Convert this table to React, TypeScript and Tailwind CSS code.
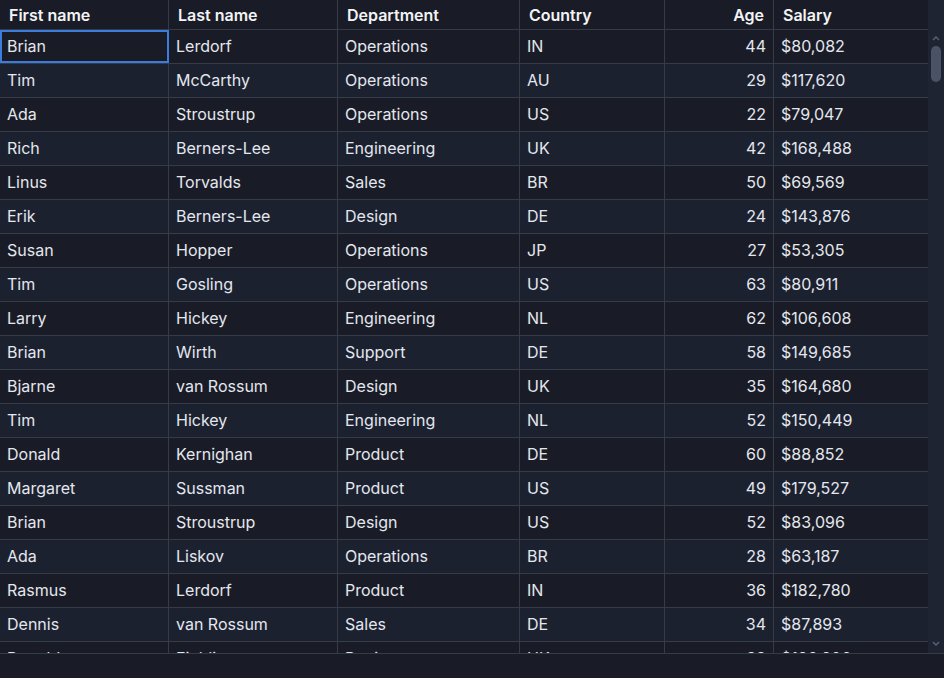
import React from "react";

type Row = [string, string, string, string, number, string];

const rows: Row[] = [
  ["Brian", "Lerdorf", "Operations", "IN", 44, "$80,082"],
  ["Tim", "McCarthy", "Operations", "AU", 29, "$117,620"],
  ["Ada", "Stroustrup", "Operations", "US", 22, "$79,047"],
  ["Rich", "Berners-Lee", "Engineering", "UK", 42, "$168,488"],
  ["Linus", "Torvalds", "Sales", "BR", 50, "$69,569"],
  ["Erik", "Berners-Lee", "Design", "DE", 24, "$143,876"],
  ["Susan", "Hopper", "Operations", "JP", 27, "$53,305"],
  ["Tim", "Gosling", "Operations", "US", 63, "$80,911"],
  ["Larry", "Hickey", "Engineering", "NL", 62, "$106,608"],
  ["Brian", "Wirth", "Support", "DE", 58, "$149,685"],
  ["Bjarne", "van Rossum", "Design", "UK", 35, "$164,680"],
  ["Tim", "Hickey", "Engineering", "NL", 52, "$150,449"],
  ["Donald", "Kernighan", "Product", "DE", 60, "$88,852"],
  ["Margaret", "Sussman", "Product", "US", 49, "$179,527"],
  ["Brian", "Stroustrup", "Design", "US", 52, "$83,096"],
  ["Ada", "Liskov", "Operations", "BR", 28, "$63,187"],
  ["Rasmus", "Lerdorf", "Product", "IN", 36, "$182,780"],
  ["Dennis", "van Rossum", "Sales", "DE", 34, "$87,893"],
  ["Donald", "Fielding", "Design", "UK", 33, "$126,806"],
];

const cols = "grid grid-cols-[169px_169px_182px_145px_109px_154px]";

export default function App() {
  return (
    <div
      className="w-[944px] h-[678px] bg-[#191c26] overflow-hidden"
      style={{ fontFamily: "Inter, 'Noto Sans', sans-serif" }}
    >
      <div className="h-[654px] box-border border-b border-[#363b48] flex">
        <div className="w-[928px] overflow-hidden">
          <div className={`${cols} h-[30px] border-b border-[#363b48] bg-[#191c26] text-[16px] font-semibold text-[#f3f4f6]`}>
            {["First name", "Last name", "Department", "Country", "Age", "Salary"].map((h, i) => (
              <div
                key={h}
                className={`flex items-center px-[9px] border-r border-[#363b48] ${i === 4 ? "justify-end" : ""} ${i === 5 ? "border-r-0" : ""}`}
              >
                {h}
              </div>
            ))}
          </div>
          {rows.map((r, ri) => (
            <div
              key={ri}
              className={`${cols} h-[34px] border-b border-[#363b48] text-[16px] text-[#e4e7ee] ${ri % 2 === 0 ? "bg-[#191c26]" : "bg-[#1c2130]"}`}
            >
              {r.map((c, ci) => (
                <div
                  key={ci}
                  className={`flex items-center px-[7px] pb-[2px] border-r border-[#363b48] ${ci === 4 ? "justify-end" : ""} ${ci === 5 ? "border-r-0" : ""} ${ri === 0 && ci === 0 ? "outline-2 -outline-offset-2 outline-[#3b7ddd] outline" : ""}`}
                >
                  {c}
                </div>
              ))}
            </div>
          ))}
        </div>
        <div className="w-[16px] bg-[#1f2433] flex flex-col items-center">
          <div className="h-[30px] w-full" />
          <div className="h-[16px] flex items-center justify-center">
            <svg width="8" height="5" viewBox="0 0 8 5">
              <path d="M1 4 L4 1 L7 4" stroke="#5b6478" strokeWidth="1.3" fill="none" />
            </svg>
          </div>
          <div className="w-[10px] h-[36px] rounded-full bg-[#4a5366]" />
          <div className="flex-1" />
          <div className="h-[16px] flex items-center justify-center mb-[2px]">
            <svg width="8" height="5" viewBox="0 0 8 5">
              <path d="M1 1 L4 4 L7 1" stroke="#5b6478" strokeWidth="1.3" fill="none" />
            </svg>
          </div>
        </div>
      </div>
    </div>
  );
}
